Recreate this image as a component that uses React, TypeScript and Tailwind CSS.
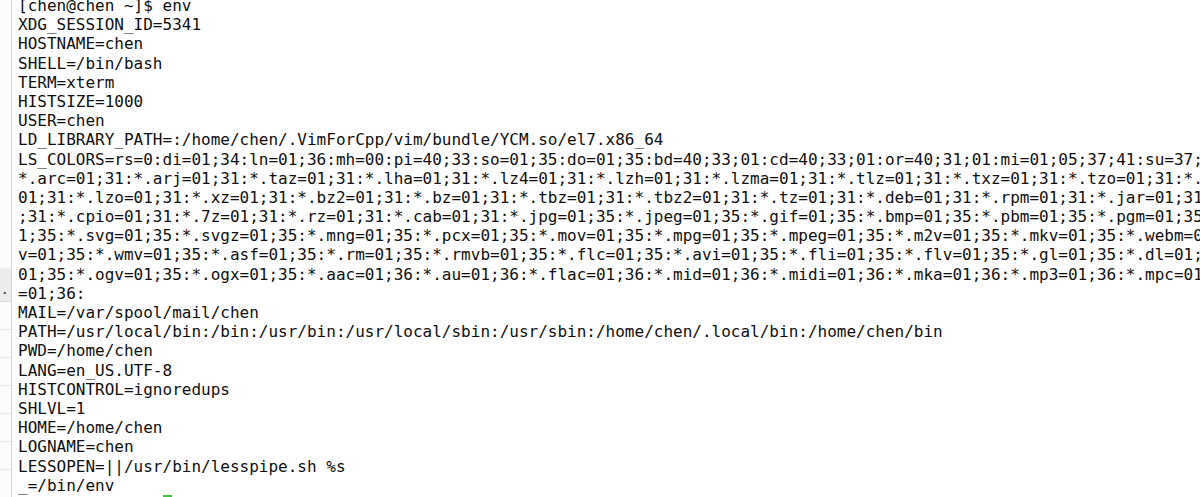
const lines = [
  "[chen@chen ~]$ env",
  "XDG_SESSION_ID=5341",
  "HOSTNAME=chen",
  "SHELL=/bin/bash",
  "TERM=xterm",
  "HISTSIZE=1000",
  "USER=chen",
  "LD_LIBRARY_PATH=:/home/chen/.VimForCpp/vim/bundle/YCM.so/el7.x86_64",
  "LS_COLORS=rs=0:di=01;34:ln=01;36:mh=00:pi=40;33:so=01;35:do=01;35:bd=40;33;01:cd=40;33;01:or=40;31;01:mi=01;05;37;41:su=37;41:sg=30;43:ca=30;41:tw=30;42:ow=34;42:st=37;44:ex=01;32:*.tar=01;31:*.tgz=01;31:",
  "*.arc=01;31:*.arj=01;31:*.taz=01;31:*.lha=01;31:*.lz4=01;31:*.lzh=01;31:*.lzma=01;31:*.tlz=01;31:*.txz=01;31:*.tzo=01;31:*.t7z=01;31:*.zip=01;31:*.z=01;31:*.Z=01;31:*.dz=01;31:*.gz=01;31:*.lrz=",
  "01;31:*.lzo=01;31:*.xz=01;31:*.bz2=01;31:*.bz=01;31:*.tbz=01;31:*.tbz2=01;31:*.tz=01;31:*.deb=01;31:*.rpm=01;31:*.jar=01;31:*.war=01;31:*.ear=01;31:*.sar=01;31:*.rar=01;31:*.alz=01;31:*.ace=01",
  ";31:*.cpio=01;31:*.7z=01;31:*.rz=01;31:*.cab=01;31:*.jpg=01;35:*.jpeg=01;35:*.gif=01;35:*.bmp=01;35:*.pbm=01;35:*.pgm=01;35:*.ppm=01;35:*.tga=01;35:*.xbm=01;35:*.xpm=01;35:*.tif=01;35:*.tiff=0",
  "1;35:*.svg=01;35:*.svgz=01;35:*.mng=01;35:*.pcx=01;35:*.mov=01;35:*.mpg=01;35:*.mpeg=01;35:*.m2v=01;35:*.mkv=01;35:*.webm=01;35:*.ogm=01;35:*.mp4=01;35:*.m4v=01;35:*.mp4v=01;35:*.vob=01;35:*.q",
  "v=01;35:*.wmv=01;35:*.asf=01;35:*.rm=01;35:*.rmvb=01;35:*.flc=01;35:*.avi=01;35:*.fli=01;35:*.flv=01;35:*.gl=01;35:*.dl=01;35:*.xcf=01;35:*.xwd=01;35:*.yuv=01;35:*.cgm=01;35:*.emf=01;35:*.axv=",
  "01;35:*.ogv=01;35:*.ogx=01;35:*.aac=01;36:*.au=01;36:*.flac=01;36:*.mid=01;36:*.midi=01;36:*.mka=01;36:*.mp3=01;36:*.mpc=01;36:*.ogg=01;36:*.ra=01;36:*.wav=01;36:*.axa=01;36:*.oga=01;36:*.spx",
  "=01;36:",
  "MAIL=/var/spool/mail/chen",
  "PATH=/usr/local/bin:/bin:/usr/bin:/usr/local/sbin:/usr/sbin:/home/chen/.local/bin:/home/chen/bin",
  "PWD=/home/chen",
  "LANG=en_US.UTF-8",
  "HISTCONTROL=ignoredups",
  "SHLVL=1",
  "HOME=/home/chen",
  "LOGNAME=chen",
  "LESSOPEN=||/usr/bin/lesspipe.sh %s",
  "_=/bin/env",
]

// rows of the side list peeking in at the left edge
const gutterRows = [0, 1, 2, 3, 4, 5, 6]

export default function App() {
  return (
    <div className="flex h-[497px] w-[1200px] overflow-hidden bg-white">
      <div className="flex w-[12px] shrink-0 flex-col border-r border-[#d6d6d6] bg-[#fbfbfb]">
        <div className="h-[268px] shrink-0" />
        {gutterRows.map((i) => (
          <div
            key={i}
            className={
              i === 0
                ? "flex h-[34px] shrink-0 items-end border-b border-[#dcdcdc] bg-[#ececec] pb-[5px] pl-[3px] text-[12px] leading-none font-bold text-[#333]"
                : "h-[28px] shrink-0 border-b border-[#e6e6e6]"
            }
          >
            {i === 0 ? "." : null}
          </div>
        ))}
      </div>

      <div className="min-w-0 flex-1 overflow-hidden pl-[6px]">
        <div className="-mt-[4px] whitespace-pre font-['DejaVu_Sans_Mono',monospace] text-[16px] leading-[19.2px] text-[#0f0f0f]">
          {lines.map((l, i) => (
            <div key={i} className="h-[19.2px]">
              {l}
            </div>
          ))}
          <div className="flex h-[19.2px] items-stretch">
            <span>[chen@chen ~]$ </span>
            <span className="inline-block w-[9.6px] bg-[#3cc43c]" />
          </div>
        </div>
      </div>
    </div>
  )
}
